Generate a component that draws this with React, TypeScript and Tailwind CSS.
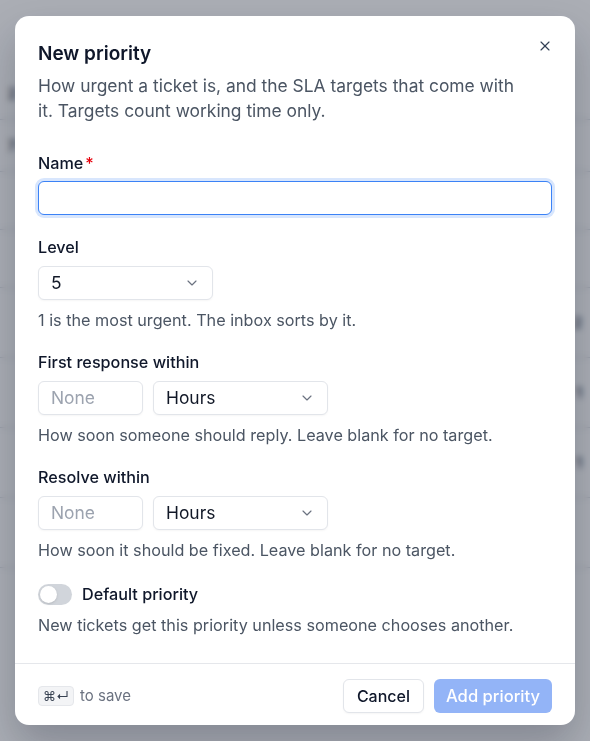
import { ChevronDown, X } from "lucide-react"

const bgRows = [
  { h: "h-[52px]", left: "2", right: "" },
  { h: "h-[52px]", left: "7 r", right: "" },
  { h: "h-[58px]", left: "", right: "" },
  { h: "h-[58px]", left: "", right: "" },
  { h: "h-[70px]", left: "", right: "2" },
  { h: "h-[70px]", left: "", right: "1" },
  { h: "h-[70px]", left: "", right: "1" },
  { h: "h-[70px]", left: "", right: "" },
]

function Field({
  label,
  required,
  help,
  children,
}: {
  label: string
  required?: boolean
  help?: string
  children: React.ReactNode
}) {
  return (
    <div className="flex flex-col">
      <label className="text-[16.2px] font-medium leading-5 text-[#0f172a]">
        {label}
        {required && <span className="ml-0.5 text-red-600">*</span>}
      </label>
      <div className={required ? "mt-[8px]" : "mt-[9px]"}>{children}</div>
      {help && <p className="mt-[10px] text-[16.2px] leading-5 text-[#4b5563]">{help}</p>}
    </div>
  )
}

function Select({ value }: { value: string }) {
  return (
    <div className="flex h-[34px] w-[175px] items-center justify-between rounded-md border border-[#e2e5ea] bg-white pl-3 pr-3 text-[17.4px] text-[#111827] shadow-[0_1px_2px_rgba(0,0,0,0.04)]">
      <span>{value}</span>
      <ChevronDown className="h-4 w-4 text-[#6b7280]" strokeWidth={1.75} />
    </div>
  )
}

function NumberBox() {
  return (
    <div className="flex h-[34px] w-[105px] items-center rounded-md border border-[#e2e5ea] bg-white px-3 text-[17.4px] text-[#9ca3af] shadow-[0_1px_2px_rgba(0,0,0,0.04)]">
      None
    </div>
  )
}

export default function App() {
  return (
    <div className="relative h-[741px] w-[590px] overflow-hidden bg-white font-['Inter',sans-serif]">
      {/* page behind the dialog */}
      <div className="flex flex-col pt-[68px]">
        {bgRows.map((r, i) => (
          <div
            key={i}
            className={`flex ${r.h} items-center justify-between border-b border-gray-300 px-2 text-sm font-semibold text-gray-700`}
          >
            <span>{r.left}</span>
            <span>{r.right}</span>
          </div>
        ))}
      </div>

      <div className="absolute inset-0 flex items-start justify-center bg-[#0f172a]/35 pt-4 backdrop-blur-[3px]">
        <div className="flex w-[560px] flex-col rounded-[14px] bg-white shadow-[0_20px_40px_rgba(15,23,42,0.25)]">
          <div className="relative px-[23px] pt-[26px] pb-7">
            <button className="absolute right-[22px] top-[22px] text-[#334155]">
              <X className="h-4 w-4" strokeWidth={1.75} />
            </button>
            <h2 className="text-[19px] font-semibold leading-6 text-[#0f172a]">New priority</h2>
            <p className="mt-[7px] pr-8 text-[17.4px] leading-[25px] text-[#4b5563]">
              How urgent a ticket is, and the SLA targets that come with it. Targets count working time only.
            </p>

            <div className="mt-[30px] flex flex-col gap-[22px]">
              <Field label="Name" required>
                <div className="h-[34px] w-full rounded-md border border-[#3b82f6] bg-white ring-[3px] ring-[#3b82f6]/20" />
              </Field>

              <Field label="Level" help="1 is the most urgent. The inbox sorts by it.">
                <Select value="5" />
              </Field>

              <Field label="First response within" help="How soon someone should reply. Leave blank for no target.">
                <div className="flex gap-[10px]">
                  <NumberBox />
                  <Select value="Hours" />
                </div>
              </Field>

              <Field label="Resolve within" help="How soon it should be fixed. Leave blank for no target.">
                <div className="flex gap-[10px]">
                  <NumberBox />
                  <Select value="Hours" />
                </div>
              </Field>

              <div className="flex flex-col">
                <div className="flex items-center gap-[10px]">
                  <div className="flex h-[21px] w-[34px] items-center rounded-full bg-[#d1d5db] px-[2px]">
                    <div className="h-[17px] w-[17px] rounded-full bg-white shadow-sm" />
                  </div>
                  <span className="text-[16.2px] font-medium text-[#0f172a]">Default priority</span>
                </div>
                <p className="mt-[9px] text-[16.2px] leading-5 text-[#4b5563]">
                  New tickets get this priority unless someone chooses another.
                </p>
              </div>
            </div>
          </div>

          <div className="flex items-center justify-between border-t border-[#e5e7eb] px-[23px] pt-[15px] pb-[12px]">
            <div className="flex items-center gap-[6px] text-[15px] text-[#6b7280]">
              <span className="flex h-5 w-9 items-center justify-center rounded border border-[#e5e7eb] bg-[#f3f4f6] text-[13px] text-[#374151]">
                ⌘↵
              </span>
              to save
            </div>
            <div className="flex gap-[10px]">
              <button className="h-[34px] rounded-md border border-[#e2e5ea] bg-white px-[13px] text-[16px] font-medium text-[#0f172a] shadow-[0_1px_2px_rgba(0,0,0,0.04)]">
                Cancel
              </button>
              <button className="h-[34px] rounded-md bg-[#93b4f7] px-[12px] text-[16.6px] font-medium text-white">
                Add priority
              </button>
            </div>
          </div>
        </div>
      </div>
    </div>
  )
}
